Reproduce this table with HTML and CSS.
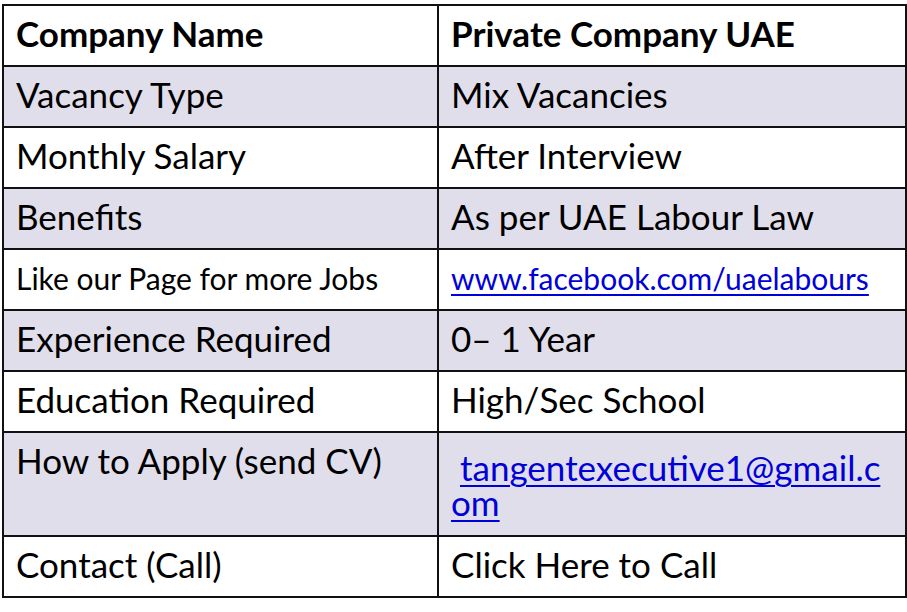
FILE: index.html
```html
<!DOCTYPE html>
<html lang="en">
<head>
<meta charset="utf-8">
<title>Job Details</title>
<link rel="stylesheet" href="styles.css">
</head>
<body>
<div class="page">
  <div class="grid">
    <div class="cell head">Company Name</div>
    <div class="cell head">Private Company UAE</div>

    <div class="cell alt">Vacancy Type</div>
    <div class="cell alt">Mix Vacancies</div>

    <div class="cell">Monthly Salary</div>
    <div class="cell">After Interview</div>

    <div class="cell alt">Benefits</div>
    <div class="cell alt">As per UAE Labour Law</div>

    <div class="cell small">Like our Page for more Jobs</div>
    <div class="cell small"><a class="link" href="#">www.facebook.com/uaelabours</a></div>

    <div class="cell alt">Experience Required</div>
    <div class="cell alt">0– 1 Year</div>

    <div class="cell">Education Required</div>
    <div class="cell">High/Sec School</div>

    <div class="cell alt">How to Apply (send CV)</div>
    <div class="cell alt email">&nbsp;<a class="link" href="#">tangentexecutive1@gmail.c<br>om</a></div>

    <div class="cell">Contact (Call)</div>
    <div class="cell">Click Here to Call</div>
  </div>
</div>
</body>
</html>
```
FILE: styles.css
```css
html, body {
  margin: 0;
  padding: 0;
  background: #ffffff;
}

.page {
  padding: 4px 0 0 2px;
}

.grid {
  width: 905px;
  box-sizing: border-box;
  display: grid;
  grid-template-columns: 433px 1fr;
  grid-template-rows: repeat(7, 59px) 102px 59px;
  gap: 2px;
  padding: 2px;
  background: #111111;
  font-family: Lato, "Open Sans", sans-serif;
  color: #000000;
}

.cell {
  background: #ffffff;
  font-size: 35px;
  line-height: 35px;
  padding: 10px 12px 0 12px;
  white-space: nowrap;
}

.cell.alt {
  background: #e1deeb;
}

.cell.head {
  font-weight: 700;
}

.cell.small {
  font-size: 30px;
  line-height: 30px;
  padding-top: 13px;
}

.cell.email {
  padding-top: 17px;
}

.link {
  color: #0000d8;
  text-decoration: underline;
  text-decoration-thickness: 2px;
  text-underline-offset: 4px;
}
```
